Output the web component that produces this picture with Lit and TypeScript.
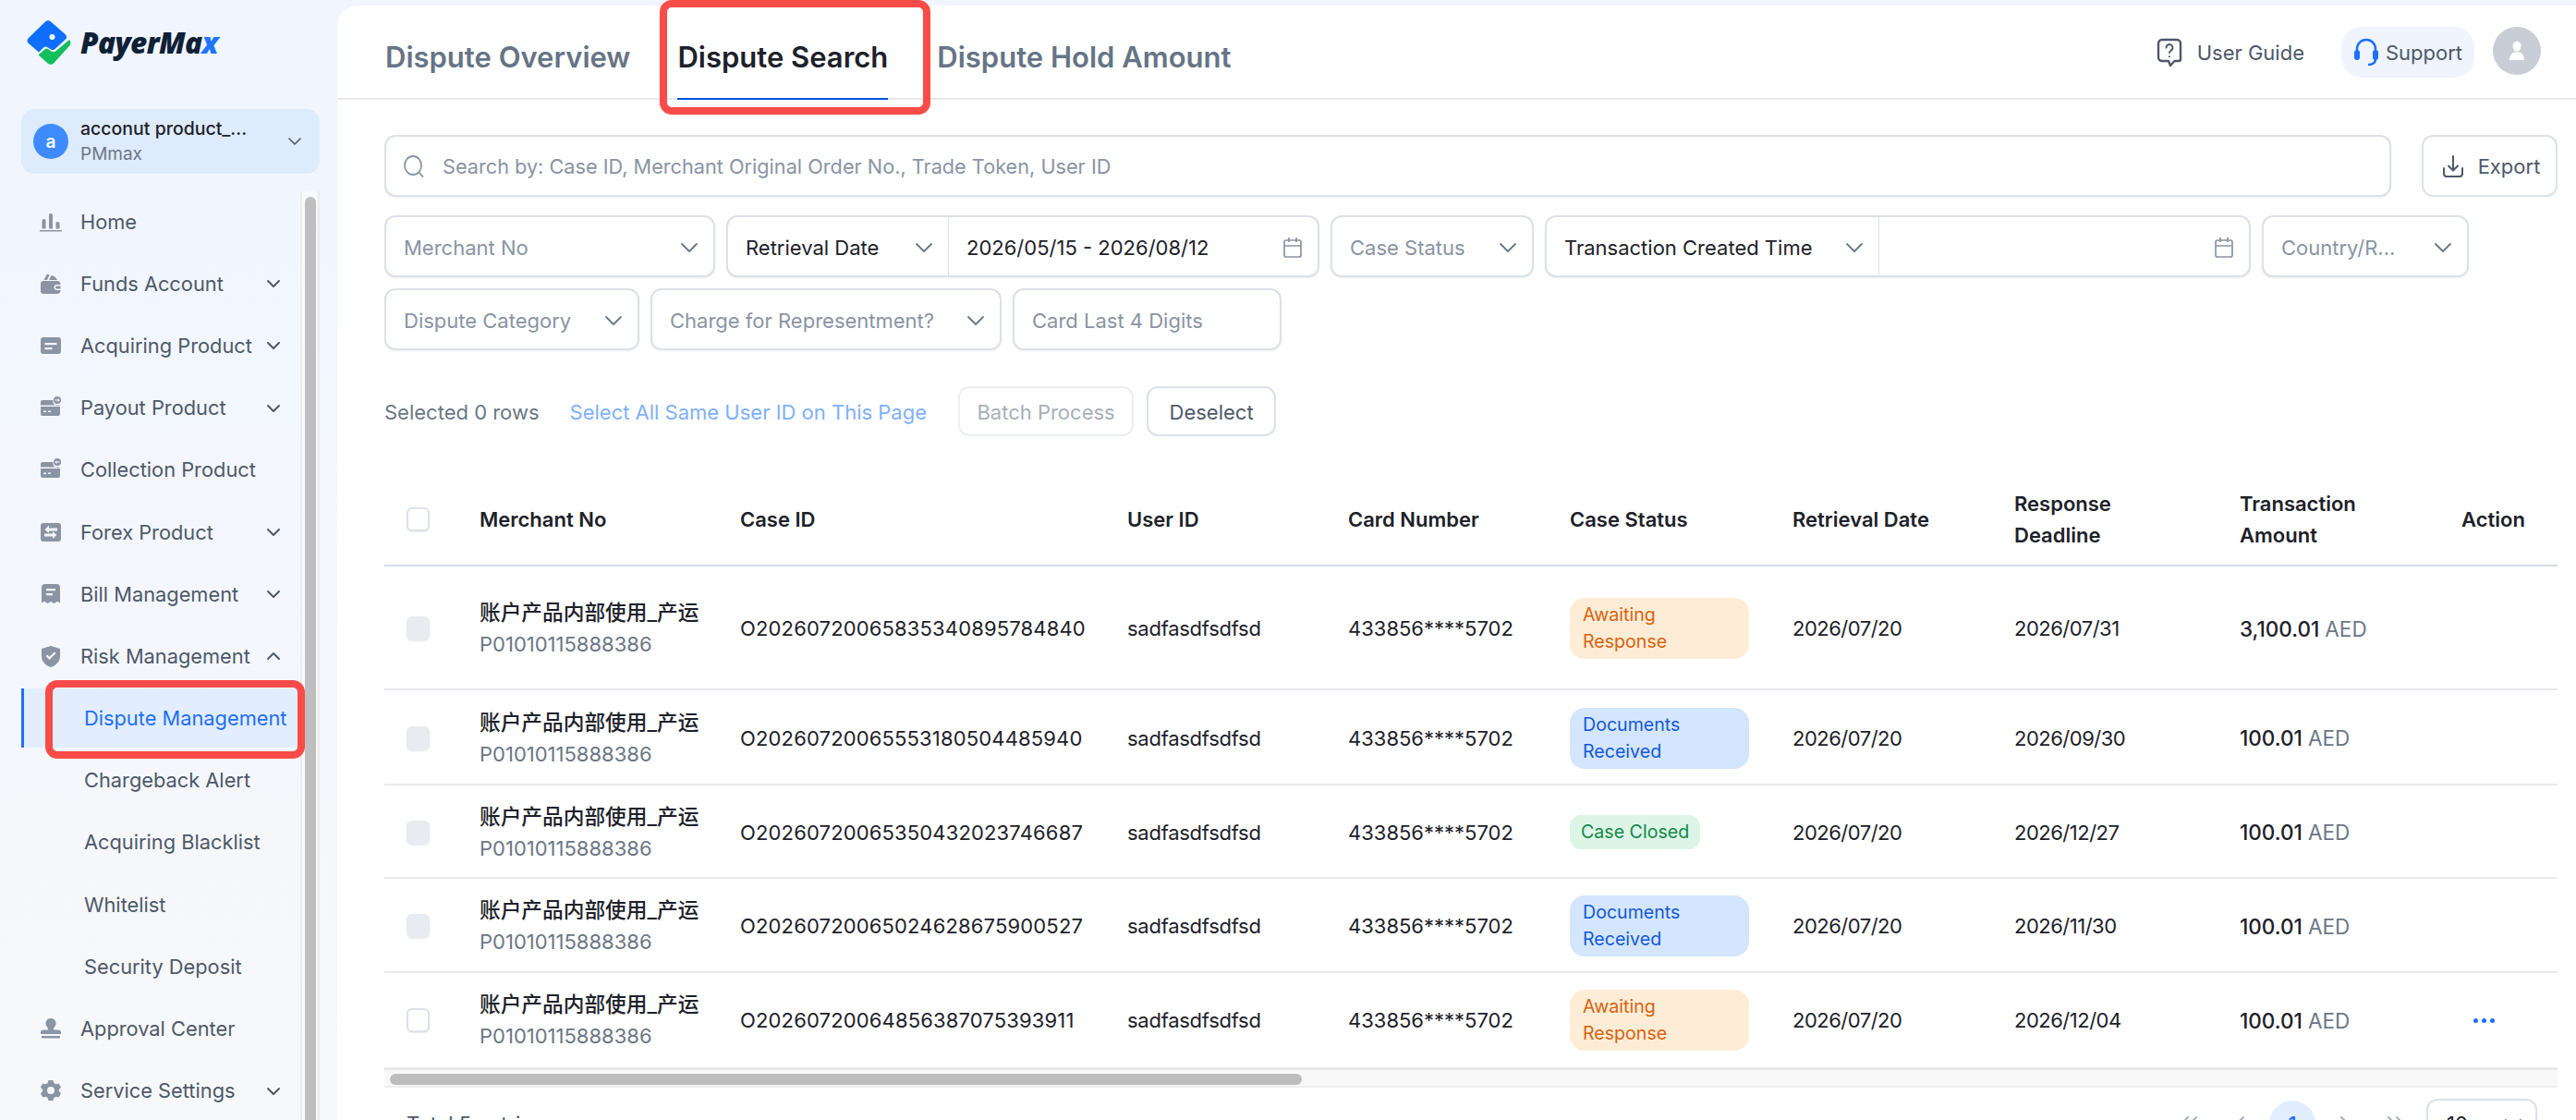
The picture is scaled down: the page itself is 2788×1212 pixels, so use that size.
import { LitElement, html, css, svg } from "lit";
import { customElement } from "lit/decorators.js";
import { classMap } from "lit/directives/class-map.js";

const chevron = (open = false) => html`<svg class="nav-chev" width="16" height="10" viewBox="0 0 16 10" fill="none" stroke="#4e5969" stroke-width="2" stroke-linecap="round" stroke-linejoin="round"><path d=${open ? "M2 8l6-6 6 6" : "M2 2l6 6 6-6"}></path></svg>`;

const selectChevron = html`<svg class="sel-chev" width="20" height="12" viewBox="0 0 20 12" fill="none" stroke="#6b7785" stroke-width="1.8" stroke-linecap="round" stroke-linejoin="round"><path d="M2 2l8 8 8-8"></path></svg>`;

const calendar = html`<svg class="cal" width="22" height="24" viewBox="0 0 22 24" fill="none" stroke="#8a94a3" stroke-width="1.7"><rect x="2" y="4" width="18" height="18" rx="2"></rect><path d="M2 10h18M7 1v5M15 1v5"></path></svg>`;

const navIcons: Record<string, unknown> = {
  home: svg`<path d="M0 21h24v1.500H0zM2.500 11a2 2 0 014 0v8.500h-4zM10 5a2 2 0 014 0v14.500h-4zM17.500 14a2 2 0 014 0v5.500h-4z"/>`,
  wallet: svg`<path d="M4.500 8l3.500-6.500 2.500 1L8 8zM10 8l2.500-5c3 .5 5.500 2.500 6.500 5zM4 9h14.500a4 4 0 014 4h-4a3 3 0 000 6h4a4 4 0 01-4 4H4a3 3 0 01-3-3V12a3 3 0 013-3zM18.500 14.500h4v3h-4a1.500 1.500 0 010-3z"/>`,
  card: svg`<path fill-rule="evenodd" d="M4 3h16a3 3 0 013 3v12a3 3 0 01-3 3H4a3 3 0 01-3-3V6a3 3 0 013-3zm1.500 6v2.200h13V9zm0 5v2.200h8V14z"/>`,
  payout: svg`<path fill-rule="evenodd" d="M3 4h11.500a5 5 0 007.500 5.500V19a2 2 0 01-2 2H3a2 2 0 01-2-2V6a2 2 0 012-2zM1 9.500V11h21V9.500zM4 15.500V17h3v-1.500zm5 0V17h3v-1.500zM19 0a4 4 0 110 8 4 4 0 010-8zm-2.500 3.400v1.200h3v1.300l2.200-1.900-2.200-1.900v1.300z"/>`,
  collect: svg`<path fill-rule="evenodd" d="M3 4h11.500a5 5 0 007.500 5.500V19a2 2 0 01-2 2H3a2 2 0 01-2-2V6a2 2 0 012-2zM1 9.500V11h21V9.500zM4 15.500V17h3v-1.500zm5 0V17h3v-1.500zM19 0a4 4 0 110 8 4 4 0 010-8zm2.500 3.400v1.200h-3v1.300l-2.200-1.900 2.200-1.900v1.300z"/>`,
  forex: svg`<path fill-rule="evenodd" d="M4 2h16a3 3 0 013 3v14a3 3 0 01-3 3H4a3 3 0 01-3-3V5a3 3 0 013-3zm6 2.500L5.500 9l4.500 4v-2.500h9V7.500h-9zM14 11v2.500H5v3h9V19l4.500-4z"/>`,
  bill: svg`<path fill-rule="evenodd" d="M6 1h12a4 4 0 014 4v16.500l-3-1.800-3.500 2.300-3.500-2-3.500 2L5 19.700l-3 1.800V5a4 4 0 014-4zm1 5v2.200h10V6zm0 5v2.200h7V11z"/>`,
  shield: svg`<path fill-rule="evenodd" d="M12 1l10 3v8c0 6-4.500 10-10 12C6.500 22 2 18 2 12V4zm5.500 8l-1.700-1.500-5.300 5.300-2.300-2.300L6.600 12l3.900 4z"/>`,
  stamp: svg`<path d="M12 1a5.500 5.500 0 014 9.300c-.8 1-1 1.700-1 3.200h5a3 3 0 013 3v1.500H1v-1.500a3 3 0 013-3h5c0-1.500-.2-2.200-1-3.200A5.500 5.500 0 0112 1zM2 20h20v2.500H2z"/>`,
  gear: svg`<path fill-rule="evenodd" d="M9.500 1h5l.8 3 2.300 1.300 3-.8 2.400 4.300-2.200 2.200v2l2.200 2.200-2.400 4.300-3-.8-2.300 1.300-.8 3h-5l-.8-3-2.300-1.300-3 .8L.9 15.200l2.200-2.200v-2L.9 8.800l2.400-4.300 3 .8 2.300-1.300zM12 8a4 4 0 100 8 4 4 0 000-8z"/>`,
};

const navIcon = (name: string) => html`<svg class="nav-icon" width="24" height="24" viewBox="0 0 24 24" fill="#8a94a3">${navIcons[name]}</svg>`;

const pagerArrow = (d: string) => html`<svg width="26" height="18" viewBox="0 0 26 18" fill="none" stroke="#a9afb9" stroke-width="2" stroke-linecap="round" stroke-linejoin="round"><path d=${d}></path></svg>`;

interface NavItem {
  label: string;
  icon?: string;
  chev?: "down" | "up";
  active?: boolean;
}

const NAV: NavItem[] = [
  { label: "Home", icon: "home" },
  { label: "Funds Account", icon: "wallet", chev: "down" },
  { label: "Acquiring Product", icon: "card", chev: "down" },
  { label: "Payout Product", icon: "payout", chev: "down" },
  { label: "Collection Product", icon: "collect" },
  { label: "Forex Product", icon: "forex", chev: "down" },
  { label: "Bill Management", icon: "bill", chev: "down" },
  { label: "Risk Management", icon: "shield", chev: "up" },
  { label: "Dispute Management", active: true },
  { label: "Chargeback Alert" },
  { label: "Acquiring Blacklist" },
  { label: "Whitelist" },
  { label: "Security Deposit" },
  { label: "Approval Center", icon: "stamp" },
  { label: "Service Settings", icon: "gear", chev: "down" },
];

type Status = "await" | "docs" | "closed";

interface Row {
  caseId: string;
  deadline: string;
  amount: string;
  status: Status;
  selectable?: boolean;
}

const ROWS: Row[] = [
  { caseId: "O20260720065835340895784840", deadline: "2026/07/31", amount: "3,100.01", status: "await" },
  { caseId: "O20260720065553180504485940", deadline: "2026/09/30", amount: "100.01", status: "docs" },
  { caseId: "O20260720065350432023746687", deadline: "2026/12/27", amount: "100.01", status: "closed" },
  { caseId: "O20260720065024628675900527", deadline: "2026/11/30", amount: "100.01", status: "docs" },
  { caseId: "O20260720064856387075393911", deadline: "2026/12/04", amount: "100.01", status: "await", selectable: true },
];

const STATUS_TEXT: Record<Status, string> = {
  await: "Awaiting Response",
  docs: "Documents Received",
  closed: "Case Closed",
};

@customElement("app-root")
export class AppRoot extends LitElement {
  static styles = css`
    :host {
      display: block;
      font-family: Inter, "Noto Sans CJK SC", sans-serif;
      color: #1d2129;
    }
    * {
      box-sizing: border-box;
    }
    .app {
      display: flex;
      height: 1212px;
      overflow: hidden;
      background: linear-gradient(180deg, #f0f5ff 0%, #f7f8fa 100%);
    }

    /* sidebar */
    .side {
      width: 365px;
      flex: none;
      display: flex;
      flex-direction: column;
      padding-left: 23px;
    }
    .logo {
      height: 99px;
      padding: 20px 0 0 5px;
      display: flex;
      align-items: flex-start;
      gap: 9px;
    }
    .logo-text {
      font: italic 800 31.5px/44px "Open Sans", sans-serif;
      letter-spacing: -0.6px;
      color: #0f2137;
      margin-top: 4px;
    }
    .logo-text span {
      color: #1f75fe;
    }
    .account {
      width: 323px;
      height: 70px;
      margin-top: 19px;
      border-radius: 14px;
      background: #deebfd;
      display: flex;
      align-items: center;
      padding: 0 19px 0 13px;
    }
    .avatar {
      width: 38px;
      height: 38px;
      border-radius: 50%;
      background: #3d8bff;
      color: #fff;
      font-size: 19px;
      font-weight: 600;
      display: flex;
      align-items: center;
      justify-content: center;
      flex: none;
    }
    .acc-text {
      margin-left: 13px;
      flex: 1;
    }
    .acc-name {
      font-size: 19.5px;
      font-weight: 500;
      line-height: 28px;
    }
    .acc-sub {
      font-size: 19px;
      line-height: 28px;
      color: #6b7785;
    }
    .menu-wrap {
      flex: 1;
      display: flex;
      margin-top: 19px;
      min-height: 0;
    }
    .menu {
      width: 302px;
      margin-top: -1px;
    }
    .item {
      position: relative;
      height: 67.2px;
      display: flex;
      align-items: center;
      padding-left: 20px;
      font-size: 21.8px;
      color: #4e5969;
      white-space: nowrap;
    }
    .nav-icon {
      flex: none;
    }
    .item .label {
      margin-left: 20px;
    }
    .item.sub .label {
      margin-left: 48px;
    }
    .nav-chev {
      position: absolute;
      left: 265px;
      top: 29px;
    }
    .item.active {
      background: #e2eefe;
      color: #1f6fff;
      height: 64px;
      margin: 1.6px 0;
      border-left: 3px solid #1f6fff;
      padding-left: 17px;
    }
    .mark {
      position: absolute;
      border: 8px solid #f94c49;
      border-radius: 13px;
      pointer-events: none;
    }
    .item .mark {
      left: 23px;
      right: -5px;
      top: -9px;
      bottom: -12px;
    }
    .sb-track {
      width: 21px;
      padding: 6px 2px 0 3px;
      border-left: 2px solid #ececec;
      border-right: 2px solid #ececec;
      background: #f8f9fb;
    }
    .sb-thumb {
      height: 100%;
      background: #bfbfbf;
      border-radius: 6px 6px 0 0;
    }

    /* main */
    .main {
      flex: 1;
      min-width: 0;
      margin-top: 6px;
      background: #fff;
      border-top-left-radius: 22px;
      display: flex;
      flex-direction: column;
    }
    .head {
      height: 102px;
      flex: none;
      border-bottom: 2px solid #e8eaee;
      display: flex;
      align-items: flex-start;
      padding-left: 52px;
    }
    .tab {
      position: relative;
      font-size: 31px;
      font-weight: 600;
      line-height: 40px;
      color: #667485;
      padding-top: 36px;
      height: 102px;
      white-space: nowrap;
    }
    .tab.on {
      color: #1d2129;
      margin: 0 53px 0 51px;
      box-shadow: inset 0 -2px 0 #0052d9;
    }
    .tab .mark {
      left: -19px;
      right: -46px;
      top: -6px;
      bottom: -16px;
    }
    .head-right {
      margin-left: auto;
      display: flex;
      align-items: center;
      height: 55px;
      margin-top: 23px;
      padding-right: 38px;
      font-size: 22px;
      color: #4e5969;
    }
    .guide {
      display: flex;
      align-items: center;
      gap: 16px;
    }
    .support {
      margin-left: 40px;
      height: 55px;
      width: 144px;
      border-radius: 22px;
      background: #eff4ff;
      display: flex;
      align-items: center;
      justify-content: center;
      gap: 7px;
    }
    .user {
      margin-left: 20px;
      width: 52px;
      height: 52px;
      margin-top: -3px;
      border-radius: 50%;
      background: #c9ced6;
      display: flex;
      align-items: center;
      justify-content: center;
    }

    .body {
      padding: 38px 20px 0 51px;
    }
    .search-row {
      display: flex;
      gap: 33px;
    }
    .box {
      height: 67px;
      border: 2px solid #dde1e8;
      border-radius: 12px;
      background: #fff;
      box-shadow: 0 1px 2px rgba(30, 50, 90, 0.08);
      display: flex;
      align-items: center;
      font-size: 22px;
      white-space: nowrap;
      flex: none;
    }
    .search {
      flex: 1;
      padding-left: 18px;
      gap: 19px;
      font-size: 21.7px;
      color: #8a94a3;
    }
    .export {
      width: 147px;
      padding-left: 3px;
      justify-content: center;
      gap: 15px;
      color: #4e5969;
      box-shadow: none;
    }
    .filters {
      display: flex;
      flex-wrap: wrap;
      gap: 12px;
      margin-top: 20px;
      width: 2280px;
    }
    .ph {
      color: #8a94a3;
    }
    .field {
      padding: 2px 16px 0 19px;
      justify-content: space-between;
    }
    .w-merchant { width: 358px; }
    .w-status { width: 220px; }
    .w-country { width: 224px; }
    .w-category { width: 276px; }
    .w-charge { width: 380px; }
    .w-card { width: 291px; }
    .w-retr { width: 642px; }
    .w-trans { width: 764px; }
    .split-a {
      height: 100%;
      padding: 2px 16px 0 19px;
      display: flex;
      align-items: center;
      justify-content: space-between;
      border-right: 1px solid #dde1e8;
      flex: none;
    }
    .w-retr .split-a { width: 239px; }
    .w-trans .split-a { width: 360px; }
    .split-b {
      flex: 1;
      height: 100%;
      padding: 2px 16px 0 19px;
      display: flex;
      align-items: center;
      justify-content: space-between;
    }
    .actions {
      display: flex;
      align-items: center;
      margin-top: 39px;
      height: 54px;
      font-size: 22px;
      color: #6b7785;
    }
    .actions span {
      padding-top: 2px;
    }
    .link {
      margin-left: 33px;
      color: #7fb0fb;
    }
    .btn {
      height: 54px;
      padding-top: 2px;
      border-radius: 12px;
      border: 2px solid #dde1e8;
      display: flex;
      align-items: center;
      justify-content: center;
      color: #4e5969;
    }
    .btn.batch {
      margin-left: 34px;
      width: 190px;
      color: #a9afb9;
      border-color: #eceef2;
    }
    .btn.desel {
      margin-left: 14px;
      width: 140px;
    }

    /* table */
    .table {
      margin-top: 27px;
      width: 2352px;
      font-size: 22px;
    }
    .tr {
      display: grid;
      grid-template-columns: 103px 282px 419px 239px 240px 241px 240px 244px 240px 104px;
      align-items: center;
      border-bottom: 2px solid #e8eaee;
    }
    .tr.th {
      height: 114px;
      padding-top: 14px;
      font-weight: 600;
      line-height: 34px;
      border-bottom-color: #d6dce6;
    }
    .tr.r0 { height: 134px; padding-top: 2px; }
    .tr.r1 { height: 103px; padding-top: 2px; }
    .tr.r2 { height: 101px; padding-top: 2px; }
    .tr.r3 { height: 102px; padding-top: 2px; }
    .tr.r4 { height: 102px; border-bottom: none; }
    .check {
      width: 25px;
      height: 26px;
      margin-left: 24px;
      border-radius: 6px;
      border: 2px solid #dde1e8;
      background: #fff;
      box-shadow: 0 1px 2px rgba(30, 50, 90, 0.1);
    }
    .check.off {
      background: #e8ebf0;
      border-color: #e8ebf0;
    }
    .mname {
      font-size: 22.7px;
      font-weight: 500;
      line-height: 35px;
      white-space: nowrap;
    }
    .mcode {
      line-height: 35px;
      color: #6b7785;
    }
    .cell {
      white-space: nowrap;
    }
    .case-id {
      letter-spacing: 0.15px;
    }
    .user-id {
      letter-spacing: -0.27px;
    }
    .date {
      letter-spacing: -0.5px;
    }
    .amount {
      font-size: 22.5px;
      font-weight: 500;
    }
    .amount span {
      font-weight: 400;
      color: #6b7785;
    }
    .badge {
      font-size: 19.6px;
      line-height: 29px;
      border-radius: 16px;
      padding: 4px 14px;
      width: 194px;
    }
    .badge.await { background: #feedd6; color: #d9620f; }
    .badge.docs { background: #d4e6fd; color: #1358d9; }
    .badge.closed {
      background: #dcf5e6;
      color: #17874a;
      width: auto;
      justify-self: start;
      padding: 4px 12px;
      border-radius: 12px;
    }
    .dots {
      display: flex;
      gap: 4px;
      padding-left: 13px;
    }
    .dots i {
      width: 5px;
      height: 5px;
      border-radius: 50%;
      background: #1f6fff;
    }
    .hbar {
      height: 22px;
      padding: 4px 0 3px 6px;
      background: #f8f8f8;
      border-top: 3px solid #e8e8e8;
      border-bottom: 2px solid #efefef;
      display: flex;
      align-items: flex-start;
    }
    .hbar div {
      width: 987px;
      height: 12px;
      border-radius: 6px;
      background: #bdbdbd;
    }
    .foot {
      display: flex;
      align-items: flex-start;
      padding: 12px 22px 0 24px;
      height: 60px;
      font-size: 22px;
      color: #4e5969;
    }
    .foot .total {
      margin-top: 14px;
    }
    .pager {
      margin-left: auto;
      display: flex;
      align-items: flex-start;
      color: #a9afb9;
    }
    .pg {
      width: 56px;
      height: 50px;
      margin-top: 2px;
      display: flex;
      align-items: center;
      justify-content: center;
    }
    .pg.cur {
      width: 50px;
      margin: 2px 3px 0;
      border-radius: 50%;
      background: #e2eefe;
      color: #1f6fff;
      font-weight: 500;
    }
    .size {
      width: 120px;
      height: 54px;
      margin-left: 5px;
      padding: 0 14px 0 20px;
      justify-content: space-between;
      color: #1d2129;
    }
  `;

  private field(label: string, width: string, placeholder = true) {
    return html`<div class="box field ${width}">
      <span class=${placeholder ? "ph" : ""}>${label}</span>${selectChevron}
    </div>`;
  }

  private sidebar() {
    return html`<aside class="side">
      <div class="logo">
        <svg width="50" height="52" viewBox="28 21 50 52">
          <path fill="#0e6fff" d="M49 24.500a4.500 4.500 0 016 0l15.500 13.500c2 2 2 4 .5 5.500L59.500 54c-1.500 1.400-3 1.400-4.500.4l-3.500-2.200c-1.500-1-3-1-4.500.3L42 57.500 31 48c-2-2-2-4 0-6z"></path>
          <path fill="#12bf5c" d="M41.500 60.500l7.500-6.500c1-.8 2-.8 3 0l3.500 2.500c1.500 1 3.500 1 5-.3L75 44c1.700 1.800 2 4.500.3 6.500L58 69.500c-1.800 1.800-4.500 1.800-6.300 0z"></path>
          <circle cx="56.500" cy="41" r="3" fill="#fff"></circle>
        </svg>
        <span class="logo-text">PayerMa<span>x</span></span>
      </div>
      <div class="account">
        <div class="avatar">a</div>
        <div class="acc-text">
          <div class="acc-name">acconut product_...</div>
          <div class="acc-sub">PMmax</div>
        </div>
        <svg width="16" height="10" viewBox="0 0 16 10" fill="none" stroke="#4e5969" stroke-width="1.6" stroke-linecap="round" stroke-linejoin="round"><path d="M2 2l6 6 6-6"></path></svg>
      </div>
      <div class="menu-wrap">
        <nav class="menu">
          ${NAV.map(
            (n) => html`<div class=${classMap({ item: true, sub: !n.icon, active: !!n.active })}>
              ${n.icon ? navIcon(n.icon) : ""}
              <span class="label">${n.label}</span>
              ${n.chev ? chevron(n.chev === "up") : ""}
              ${n.active ? html`<div class="mark"></div>` : ""}
            </div>`
          )}
        </nav>
        <div class="sb-track"><div class="sb-thumb"></div></div>
      </div>
    </aside>`;
  }

  private header() {
    return html`<header class="head">
      <div class="tab">Dispute Overview</div>
      <div class="tab on">Dispute Search<div class="mark"></div></div>
      <div class="tab">Dispute Hold Amount</div>
      <div class="head-right">
        <div class="guide">
          <svg width="28" height="32" viewBox="0 0 28 32" fill="none" stroke="#4e5969" stroke-width="2.4" stroke-linejoin="round"><path d="M6 2h16a4 4 0 014 4v17a2 2 0 01-2 2h-4.500L15 30l-2-5H6a4 4 0 01-4-4V6a4 4 0 014-4z"></path><path d="M10.500 10.500a3.500 3.500 0 116 2.500c-1 1-2.500 1.500-2.500 3" stroke-width="2" stroke-linecap="round"></path><path d="M14 19.500v1.500" stroke-width="2"></path></svg>
          User Guide
        </div>
        <div class="support">
          <svg width="28" height="32" viewBox="0 0 28 32" fill="none" stroke="#1f6fff"><path d="M4 17v-5a10 10 0 0120 0v5" stroke-width="2.5"></path><rect x="1" y="13" width="6" height="11" rx="3" fill="#1f6fff" stroke="none"></rect><rect x="21" y="13" width="6" height="11" rx="3" fill="#1f6fff" stroke="none"></rect><path d="M24 23c0 4-3 6-8 6" stroke-width="2.5"></path></svg>
          Support
        </div>
        <div class="user">
          <svg width="18" height="22" viewBox="0 0 18 22" fill="#fff"><ellipse cx="9" cy="6" rx="4.500" ry="5.500"></ellipse><path d="M1 21c0-5 3-8 5.500-8.500h5C14 13 17 16 17 21z"></path></svg>
        </div>
      </div>
    </header>`;
  }

  private filters() {
    return html`<div class="search-row">
        <div class="box search">
          <svg width="24" height="26" viewBox="0 0 24 26" fill="none" stroke="#8a94a3" stroke-width="1.8" stroke-linecap="round"><ellipse cx="11" cy="12" rx="9" ry="10"></ellipse><path d="M17.500 19.500l4 4.500"></path></svg>
          Search by: Case ID, Merchant Original Order No., Trade Token, User ID
        </div>
        <div class="box export">
          <svg width="24" height="26" viewBox="0 0 24 26" fill="none" stroke="#4e5969" stroke-width="2" stroke-linecap="round" stroke-linejoin="round"><path d="M12 2v15M7 12.500l5 5 5-5M2 15v6a3 3 0 003 3h14a3 3 0 003-3v-6"></path></svg>
          Export
        </div>
      </div>
      <div class="filters">
        ${this.field("Merchant No", "w-merchant")}
        <div class="box w-retr">
          <div class="split-a">Retrieval Date${selectChevron}</div>
          <div class="split-b">2026/05/15 - 2026/08/12${calendar}</div>
        </div>
        ${this.field("Case Status", "w-status")}
        <div class="box w-trans">
          <div class="split-a">Transaction Created Time${selectChevron}</div>
          <div class="split-b"><span></span>${calendar}</div>
        </div>
        ${this.field("Country/R...", "w-country")}
        ${this.field("Dispute Category", "w-category")}
        ${this.field("Charge for Representment?", "w-charge")}
        <div class="box field w-card"><span class="ph">Card Last 4 Digits</span></div>
      </div>
      <div class="actions">
        <span>Selected 0 rows</span>
        <span class="link">Select All Same User ID on This Page</span>
        <div class="btn batch">Batch Process</div>
        <div class="btn desel">Deselect</div>
      </div>`;
  }

  private table() {
    return html`<div class="table">
      <div class="tr th">
        <div class="check"></div>
        <div>Merchant No</div>
        <div>Case ID</div>
        <div>User ID</div>
        <div>Card Number</div>
        <div>Case Status</div>
        <div>Retrieval Date</div>
        <div>Response<br />Deadline</div>
        <div>Transaction<br />Amount</div>
        <div>Action</div>
      </div>
      ${ROWS.map(
        (r, i) => html`<div class="tr r${i}">
          <div class="check ${r.selectable ? "" : "off"}"></div>
          <div>
            <div class="mname">账户产品内部使用_产运</div>
            <div class="mcode">P01010115888386</div>
          </div>
          <div class="cell case-id">${r.caseId}</div>
          <div class="cell user-id">sadfasdfsdfsd</div>
          <div class="cell">433856****5702</div>
          <div class="badge ${r.status}">${STATUS_TEXT[r.status]}</div>
          <div class="cell date">2026/07/20</div>
          <div class="cell date">${r.deadline}</div>
          <div class="cell amount">${r.amount} <span>AED</span></div>
          <div>${r.selectable ? html`<div class="dots"><i></i><i></i><i></i></div>` : ""}</div>
        </div>`
      )}
      <div class="hbar"><div></div></div>
      <div class="foot">
        <span class="total">Total 5 entries</span>
        <div class="pager">
          <div class="pg">${pagerArrow("M12 2L5 9l7 7M21 2l-7 7 7 7")}</div>
          <div class="pg">${pagerArrow("M16 2L9 9l7 7")}</div>
          <div class="pg cur">1</div>
          <div class="pg">${pagerArrow("M10 2l7 7-7 7")}</div>
          <div class="pg">${pagerArrow("M5 2l7 7-7 7M14 2l7 7-7 7")}</div>
          <div class="box size">10 ${selectChevron}</div>
        </div>
      </div>
    </div>`;
  }

  render() {
    return html`<div class="app">
      ${this.sidebar()}
      <main class="main">
        ${this.header()}
        <div class="body">${this.filters()} ${this.table()}</div>
      </main>
    </div>`;
  }
}
